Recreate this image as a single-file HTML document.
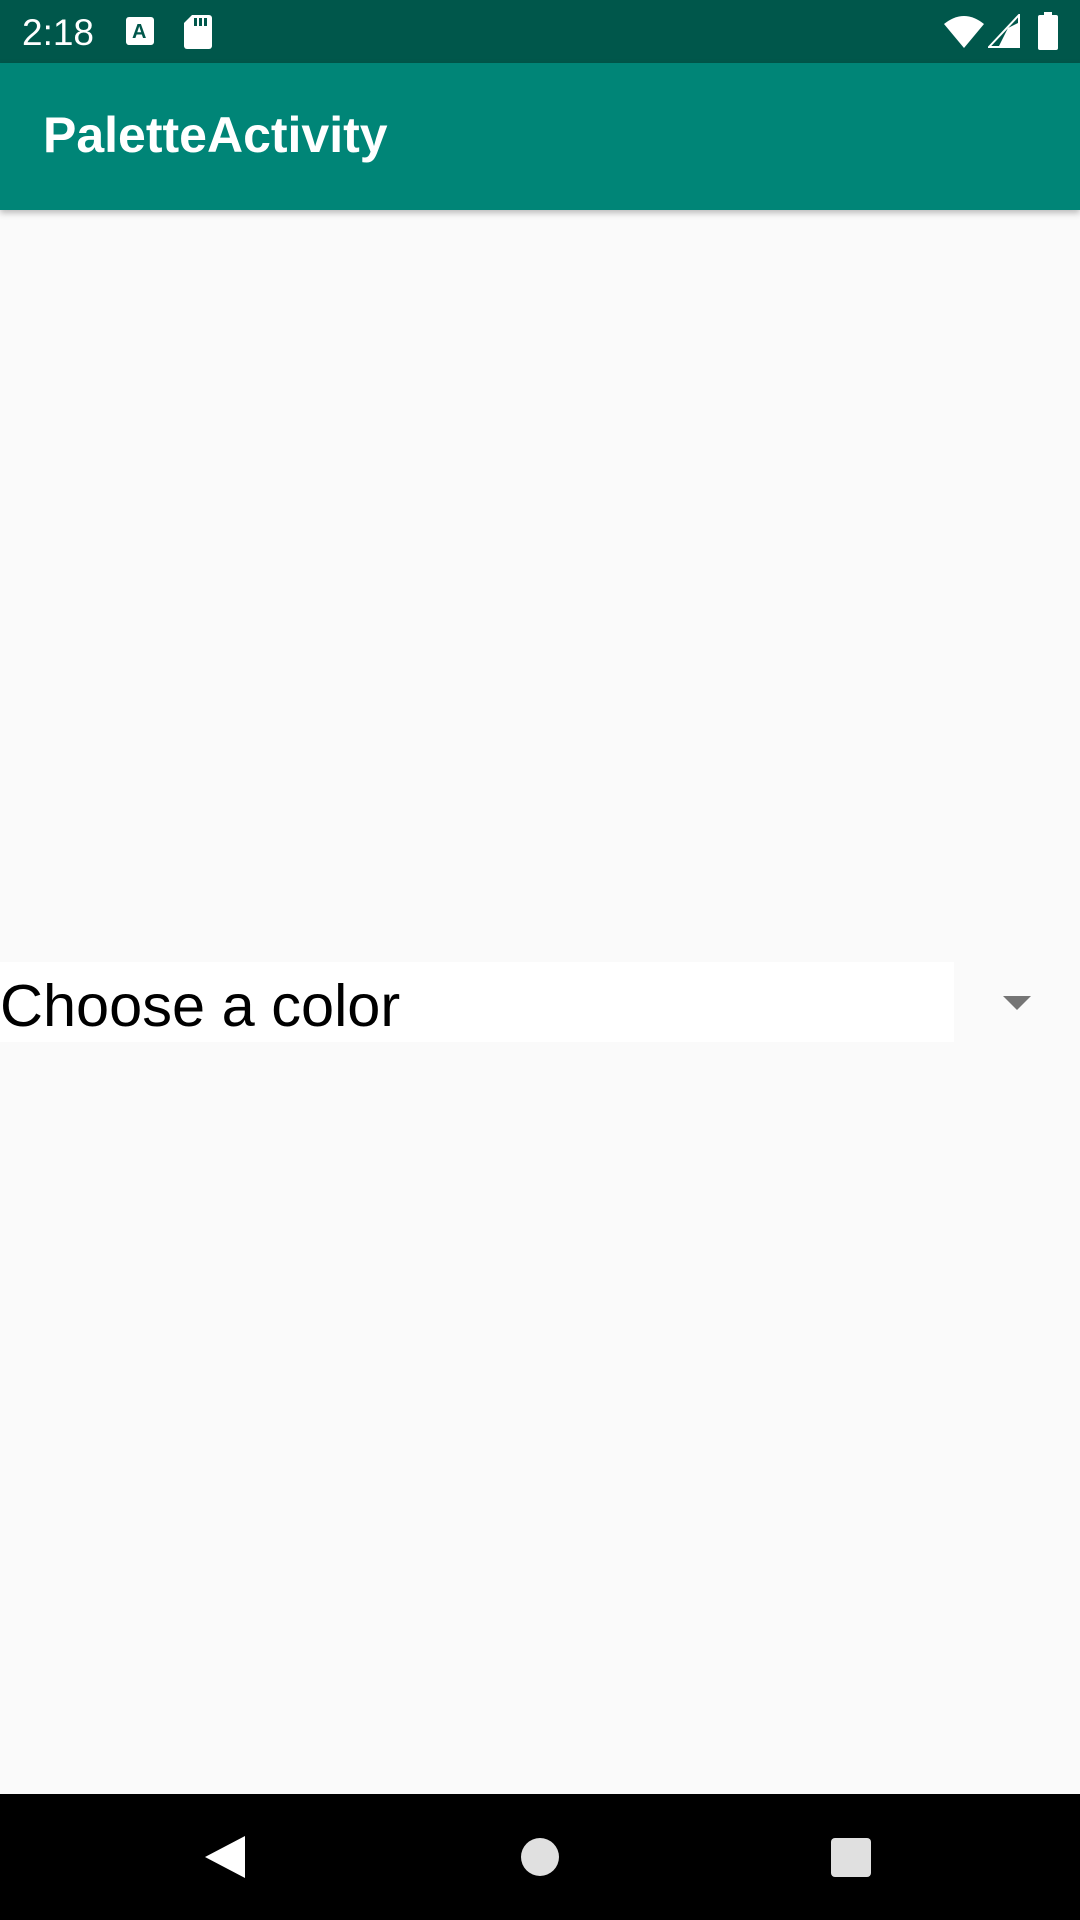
<!DOCTYPE html>
<html><head><meta charset="utf-8"><style>
html,body{margin:0;padding:0}
body{width:1080px;height:1920px;position:relative;background:#FAFAFA;overflow:hidden;font-family:"Liberation Sans",sans-serif}
.sb{position:absolute;left:0;top:0;width:1080px;height:63px;background:#00574B}
.ab{position:absolute;left:0;top:63px;width:1080px;height:147px;background:#008577;box-shadow:0 3px 6px rgba(0,0,0,.25)}
.title{position:absolute;left:43px;top:106px;color:#fff;font-size:50px;font-weight:bold}
.time{position:absolute;left:22px;top:12px;color:#fff;font-size:37px}
.spin{position:absolute;left:0;top:962px;width:954px;height:80px;background:#fff}
.spt{position:absolute;left:0;top:971px;font-size:59.5px;color:#000}
.nav{position:absolute;left:0;top:1794px;width:1080px;height:126px;background:#000}
</style></head><body>
<div class="sb"></div>
<div class="time">2:18</div>
<svg style="position:absolute;left:126px;top:17px" width="30" height="30" viewBox="0 0 30 30"><rect x="0" y="0" width="28" height="28" rx="3" fill="#fff"/><text x="6" y="21" font-size="20" font-weight="bold" fill="#00574B" font-family="Liberation Sans">A</text></svg>
<svg style="position:absolute;left:184px;top:15px" width="28" height="34" viewBox="0 0 28 34"><path d="M8 0H25a3 3 0 0 1 3 3V31a3 3 0 0 1-3 3H3a3 3 0 0 1-3-3V8z" fill="#fff"/><rect x="10" y="3" width="3" height="8" fill="#00574B"/><rect x="15" y="3" width="3" height="8" fill="#00574B"/><rect x="20" y="3" width="3" height="8" fill="#00574B"/></svg>
<svg style="position:absolute;left:944px;top:14px" width="40" height="34" viewBox="0 0 40 34"><path d="M0 10Q20 -6 40 10L20 34z" fill="#fff"/></svg>
<svg style="position:absolute;left:988px;top:14px" width="32" height="34" viewBox="0 0 32 34"><path d="M31 1V33H1z" fill="none" stroke="#fff" stroke-width="2"/><path d="M32 8V34H10L20 14z" fill="#fff"/></svg>
<svg style="position:absolute;left:1038px;top:12px" width="20" height="38" viewBox="0 0 20 38"><rect x="6" y="0" width="8" height="4" fill="#fff"/><rect x="0" y="3" width="20" height="35" rx="2" fill="#fff"/></svg>
<div class="ab"></div>
<div class="title">PaletteActivity</div>
<div class="spin"></div>
<div class="spt">Choose a color</div>
<svg style="position:absolute;left:1003px;top:996px" width="28" height="14" viewBox="0 0 28 14"><path d="M0 0H28L14 14z" fill="#757575"/></svg>
<div class="nav"></div>
<svg style="position:absolute;left:205px;top:1836px" width="40" height="42" viewBox="0 0 40 42"><path d="M40 0V42L0 21z" fill="#fff"/></svg>
<div style="position:absolute;left:521px;top:1838px;width:38px;height:38px;border-radius:50%;background:#e0e0e0"></div>
<div style="position:absolute;left:831px;top:1838px;width:40px;height:39px;border-radius:4px;background:#e0e0e0"></div>
</body></html>
